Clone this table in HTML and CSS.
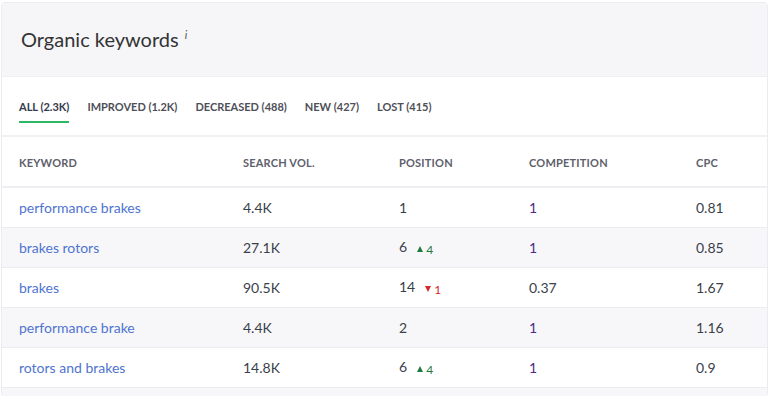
FILE: index.html
```html
<!DOCTYPE html>
<html>
<head>
<meta charset="utf-8">
<link rel="stylesheet" href="styles.css">
</head>
<body>
<div class="card">
  <div class="card-head">
    <h1 class="title">Organic keywords <span class="info">i</span></h1>
  </div>
  <div class="tabs">
    <span class="tab active">ALL (2.3K)</span>
    <span class="tab">IMPROVED (1.2K)</span>
    <span class="tab">DECREASED (488)</span>
    <span class="tab">NEW (427)</span>
    <span class="tab">LOST (415)</span>
  </div>
  <div class="table">
    <div class="row head">
      <div>KEYWORD</div><div>SEARCH VOL.</div><div>POSITION</div><div>COMPETITION</div><div>CPC</div>
    </div>
    <div class="row">
      <div class="kw">performance brakes</div><div>4.4K</div><div>1</div><div class="comp">1</div><div>0.81</div>
    </div>
    <div class="row alt">
      <div class="kw">brakes rotors</div><div>27.1K</div><div>6<span class="up"><i class="tri-up"></i>4</span></div><div class="comp">1</div><div>0.85</div>
    </div>
    <div class="row">
      <div class="kw">brakes</div><div>90.5K</div><div>14<span class="down"><i class="tri-down"></i>1</span></div><div>0.37</div><div>1.67</div>
    </div>
    <div class="row alt">
      <div class="kw">performance brake</div><div>4.4K</div><div>2</div><div class="comp">1</div><div>1.16</div>
    </div>
    <div class="row">
      <div class="kw">rotors and brakes</div><div>14.8K</div><div>6<span class="up"><i class="tri-up"></i>4</span></div><div class="comp">1</div><div>0.9</div>
    </div>
    <div class="row alt short"></div>
  </div>
</div>
</body>
</html>
```
FILE: styles.css
```css
html, body {
  margin: 0;
  padding: 0;
  background: #ffffff;
  overflow: hidden;
}
body {
  padding: 2px 0 0 1px;
  font-family: Lato, "Liberation Sans", sans-serif;
  color: #333333;
  height: 396px;
  box-sizing: border-box;
}
.card {
  width: 767px;
  border: 1px solid #ebebf0;
  border-radius: 4px;
  box-sizing: border-box;
  overflow: hidden;
}
.card-head {
  background: #f6f6f9;
  height: 73px;
  display: flex;
  align-items: center;
  padding-left: 19px;
  border-bottom: 1px solid #efeff3;
}
.title {
  margin: 0;
  font-size: 20px;
  font-weight: 400;
  color: #333333;
  padding-bottom: 1px;
}
.info {
  font-size: 11px;
  font-style: italic;
  color: #555;
  vertical-align: 8px;
  margin-left: 1px;
}
.tabs {
  display: flex;
  gap: 18px;
  padding: 22px 0 0 17px;
  height: 60px;
  box-sizing: border-box;
  border-bottom: 2px solid #f1f1f5;
}
.tab {
  font-size: 11px;
  font-weight: 700;
  color: #4e4f58;
  height: 22px;
  box-sizing: border-box;
  padding-top: 1px;
}
.tab.active {
  color: #333a4d;
  border-bottom: 2px solid #2cb665;
  height: 24px;
}
.table {
  display: flex;
  flex-direction: column;
}
.row {
  display: grid;
  grid-template-columns: 224px 156px 130px 167px 1fr;
  padding-left: 17px;
  height: 40px;
  align-items: center;
  font-size: 14px;
  color: #3b3f4a;
  border-bottom: 1px solid #ececf2;
  box-sizing: border-box;
}
.row.alt {
  background: #f7f7fa;
}
.row.short {
  height: 8px;
  border-bottom: none;
}
.row.head {
  height: 51px;
  font-size: 11px;
  font-weight: 700;
  color: #5e606b;
  letter-spacing: 0.2px;
  border-bottom: 2px solid #efeff3;
  padding-top: 1px;
}
.kw {
  color: #4f74d0;
}
.comp {
  color: #4d2a86;
}
.up, .down {
  font-size: 12px;
  margin-left: 10px;
  display: inline-flex;
  align-items: center;
}
.up { color: #1f7a3f; }
.down { color: #d22a2a; }
.tri-up, .tri-down {
  display: inline-block;
  width: 0;
  height: 0;
  border-left: 3.5px solid transparent;
  border-right: 3.5px solid transparent;
  margin-right: 3px;
}
.tri-up { border-bottom: 6px solid #1f7a3f; }
.tri-down { border-top: 6px solid #d22a2a; }
```
